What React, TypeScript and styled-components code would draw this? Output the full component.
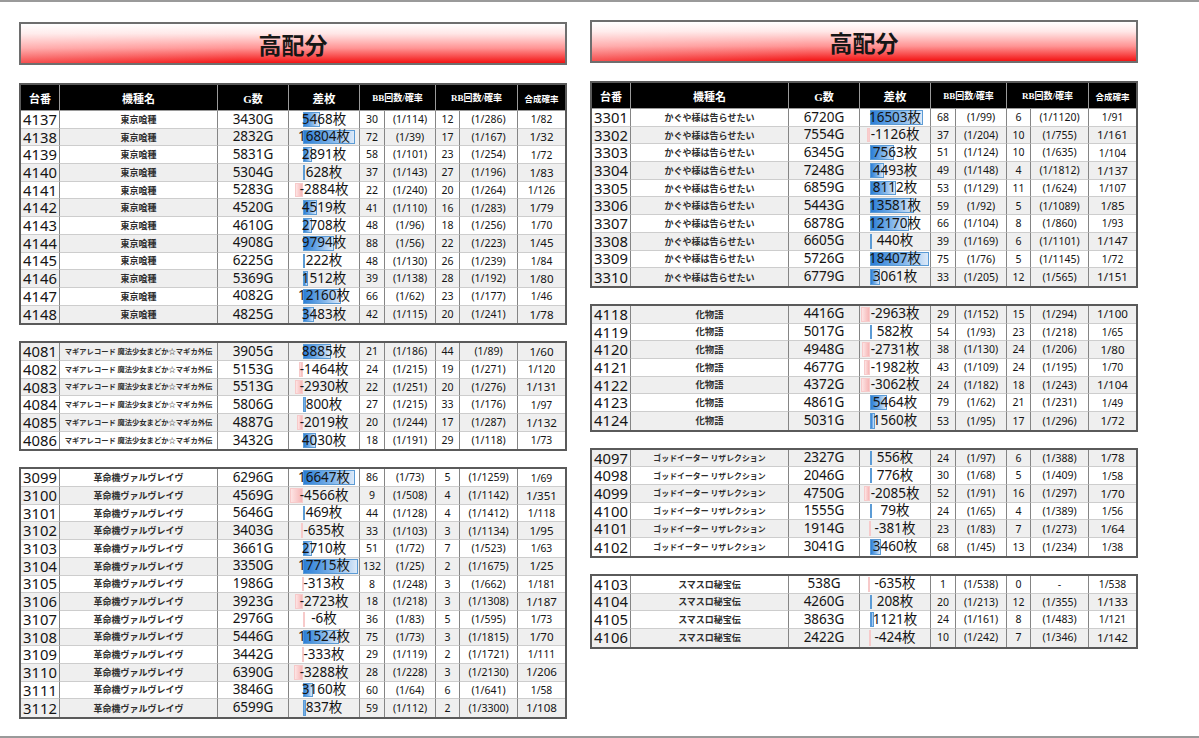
import React from 'react';
import styled, { createGlobalStyle } from 'styled-components';

const GlobalStyle = createGlobalStyle`
  html, body {
    margin: 0;
    padding: 0;
    background: #fff;
  }
  body {
    font-family: "Noto Sans", "Noto Sans CJK JP", sans-serif;
    color: #111;
  }
`;

const Page = styled.div`
  width: 1199px;
  height: 738px;
  box-sizing: border-box;
  border-top: 2px solid #9a9a9a;
  border-bottom: 2px solid #9a9a9a;
  padding-left: 19px;
  display: flex;
  gap: 23px;
  overflow: hidden;
`;

const Panel = styled.section<{ $top: number }>`
  width: 548px;
  padding-top: ${p => p.$top}px;
  display: flex;
  flex-direction: column;
  gap: 16px;
`;

const Title = styled.h1`
  margin: 0 0 2px;
  height: 43px;
  box-sizing: border-box;
  border: 2px solid #6e6e6e;
  background:
    linear-gradient(to right, rgba(255, 255, 255, 0.25), rgba(255, 255, 255, 0) 40%),
    linear-gradient(to bottom, #ffffff 0%, #ffe6e6 25%, #ff9494 62%, #f31414 100%);
  display: flex;
  align-items: center;
  justify-content: center;
  font-family: "Noto Sans CJK JP", sans-serif;
  font-size: 23px;
  font-weight: 700;
  color: #161616;
`;

const Table = styled.table`
  width: 548px;
  box-sizing: border-box;
  border: 2px solid #5a5a5a;
  border-collapse: separate;
  border-spacing: 0;
  table-layout: fixed;
`;

const HeadRow = styled.tr`
  height: 26px;
  background: #000;
`;

const HeadCell = styled.th<{ $size: number }>`
  padding: 0;
  color: #fff;
  font-family: "Liberation Serif", "Noto Sans CJK JP", serif;
  font-weight: 700;
  font-size: ${p => p.$size}px;
  text-align: center;
  white-space: nowrap;
  border-right: 1px solid #9a9a9a;
  border-bottom: 1px solid #9a9a9a;
  &:last-child {
    border-right: 0;
  }
`;

const Row = styled.tr<{ $alt: boolean }>`
  height: 17.7px;
  background: ${p => (p.$alt ? '#efefef' : '#fff')};
  &:last-child td {
    border-bottom: 0;
  }
`;

const Cell = styled.td`
  padding: 0;
  line-height: 1;
  text-align: center;
  white-space: nowrap;
  color: #141414;
  border-right: 1px solid #858585;
  border-bottom: 1px solid #cdcdcd;
  &:last-child {
    border-right: 0;
  }
`;

const NumberCell = styled(Cell)`
  text-align: left;
  padding-left: 2px;
  font-size: 14.8px;
`;

const NameCell = styled(Cell)<{ $size: number }>`
  overflow: hidden;
  font-family: "Noto Sans CJK JP", sans-serif;
  font-size: ${p => p.$size}px;
  font-weight: 700;
  color: #2e2e2e;
`;

const GameCell = styled(Cell)`
  font-size: 13.5px;
`;

const DiffCell = styled(Cell)`
  position: relative;
  overflow: hidden;
  font-size: 13.5px;
`;

const DiffText = styled.span`
  position: relative;
  z-index: 1;
`;

const Bar = styled.div<{ $neg: boolean }>`
  position: absolute;
  top: 1px;
  bottom: 1px;
  box-sizing: border-box;
  background: ${p =>
    p.$neg
      ? 'linear-gradient(to left, #f6b6b6 0%, #fde4e4 100%)'
      : 'linear-gradient(to right, #2b7ed6 0%, #7db3ea 55%, #dce9f8 100%)'};
  border: 1px solid ${p => (p.$neg ? '#f7caca' : '#5b9bd5')};
`;

const CountCell = styled(Cell)`
  font-size: 10.5px;
`;

const RateCell = styled(Cell)`
  font-size: 10.5px;
`;

const TotalCell = styled(Cell)<{ $alt: boolean }>`
  font-size: ${p => (p.$alt ? 11.6 : 10.3)}px;
`;

type Data = [string, string, number, string, string, string, string, string];

interface Group {
  name: string;
  nameSize: number;
  rows: Data[];
}

interface PanelData {
  top: number;
  max: number;
  min: number;
  groups: Group[];
}

const COLS = [39, 158, 71, 71, 25, 51, 24, 58, 47];

const panels: PanelData[] = [
  {
    top: 20,
    max: 17715,
    min: 4566,
    groups: [
      {
        name: '東京喰種',
        nameSize: 9,
        rows: [
          ['4137', '3430G', 5468, '30', '(1/114)', '12', '(1/286)', '1/82'],
          ['4138', '2832G', 16804, '72', '(1/39)', '17', '(1/167)', '1/32'],
          ['4139', '5831G', 2891, '58', '(1/101)', '23', '(1/254)', '1/72'],
          ['4140', '5304G', 628, '37', '(1/143)', '27', '(1/196)', '1/83'],
          ['4141', '5283G', -2884, '22', '(1/240)', '20', '(1/264)', '1/126'],
          ['4142', '4520G', 4519, '41', '(1/110)', '16', '(1/283)', '1/79'],
          ['4143', '4610G', 2708, '48', '(1/96)', '18', '(1/256)', '1/70'],
          ['4144', '4908G', 9794, '88', '(1/56)', '22', '(1/223)', '1/45'],
          ['4145', '6225G', 222, '48', '(1/130)', '26', '(1/239)', '1/84'],
          ['4146', '5369G', 1512, '39', '(1/138)', '28', '(1/192)', '1/80'],
          ['4147', '4082G', 12160, '66', '(1/62)', '23', '(1/177)', '1/46'],
          ['4148', '4825G', 3483, '42', '(1/115)', '20', '(1/241)', '1/78'],
        ],
      },
      {
        name: 'マギアレコード 魔法少女まどか☆マギカ外伝',
        nameSize: 7.3,
        rows: [
          ['4081', '3905G', 8885, '21', '(1/186)', '44', '(1/89)', '1/60'],
          ['4082', '5153G', -1464, '24', '(1/215)', '19', '(1/271)', '1/120'],
          ['4083', '5513G', -2930, '22', '(1/251)', '20', '(1/276)', '1/131'],
          ['4084', '5806G', 800, '27', '(1/215)', '33', '(1/176)', '1/97'],
          ['4085', '4887G', -2019, '20', '(1/244)', '17', '(1/287)', '1/132'],
          ['4086', '3432G', 4030, '18', '(1/191)', '29', '(1/118)', '1/73'],
        ],
      },
      {
        name: '革命機ヴァルヴレイヴ',
        nameSize: 9,
        rows: [
          ['3099', '6296G', 16647, '86', '(1/73)', '5', '(1/1259)', '1/69'],
          ['3100', '4569G', -4566, '9', '(1/508)', '4', '(1/1142)', '1/351'],
          ['3101', '5646G', 469, '44', '(1/128)', '4', '(1/1412)', '1/118'],
          ['3102', '3403G', -635, '33', '(1/103)', '3', '(1/1134)', '1/95'],
          ['3103', '3661G', 2710, '51', '(1/72)', '7', '(1/523)', '1/63'],
          ['3104', '3350G', 17715, '132', '(1/25)', '2', '(1/1675)', '1/25'],
          ['3105', '1986G', -313, '8', '(1/248)', '3', '(1/662)', '1/181'],
          ['3106', '3923G', -2723, '18', '(1/218)', '3', '(1/1308)', '1/187'],
          ['3107', '2976G', -6, '36', '(1/83)', '5', '(1/595)', '1/73'],
          ['3108', '5446G', 11524, '75', '(1/73)', '3', '(1/1815)', '1/70'],
          ['3109', '3442G', -333, '29', '(1/119)', '2', '(1/1721)', '1/111'],
          ['3110', '6390G', -3288, '28', '(1/228)', '3', '(1/2130)', '1/206'],
          ['3111', '3846G', 3160, '60', '(1/64)', '6', '(1/641)', '1/58'],
          ['3112', '6599G', 837, '59', '(1/112)', '2', '(1/3300)', '1/108'],
        ],
      },
    ],
  },
  {
    top: 18,
    max: 18407,
    min: 3062,
    groups: [
      {
        name: 'かぐや様は告らせたい',
        nameSize: 9,
        rows: [
          ['3301', '6720G', 16503, '68', '(1/99)', '6', '(1/1120)', '1/91'],
          ['3302', '7554G', -1126, '37', '(1/204)', '10', '(1/755)', '1/161'],
          ['3303', '6345G', 7563, '51', '(1/124)', '10', '(1/635)', '1/104'],
          ['3304', '7248G', 4493, '49', '(1/148)', '4', '(1/1812)', '1/137'],
          ['3305', '6859G', 8112, '53', '(1/129)', '11', '(1/624)', '1/107'],
          ['3306', '5443G', 13581, '59', '(1/92)', '5', '(1/1089)', '1/85'],
          ['3307', '6878G', 12170, '66', '(1/104)', '8', '(1/860)', '1/93'],
          ['3308', '6605G', 440, '39', '(1/169)', '6', '(1/1101)', '1/147'],
          ['3309', '5726G', 18407, '75', '(1/76)', '5', '(1/1145)', '1/72'],
          ['3310', '6779G', 3061, '33', '(1/205)', '12', '(1/565)', '1/151'],
        ],
      },
      {
        name: '化物語',
        nameSize: 9.4,
        rows: [
          ['4118', '4416G', -2963, '29', '(1/152)', '15', '(1/294)', '1/100'],
          ['4119', '5017G', 582, '54', '(1/93)', '23', '(1/218)', '1/65'],
          ['4120', '4948G', -2731, '38', '(1/130)', '24', '(1/206)', '1/80'],
          ['4121', '4677G', -1982, '43', '(1/109)', '24', '(1/195)', '1/70'],
          ['4122', '4372G', -3062, '24', '(1/182)', '18', '(1/243)', '1/104'],
          ['4123', '4861G', 5464, '79', '(1/62)', '21', '(1/231)', '1/49'],
          ['4124', '5031G', 1560, '53', '(1/95)', '17', '(1/296)', '1/72'],
        ],
      },
      {
        name: 'ゴッドイーター リザレクション',
        nameSize: 7.9,
        rows: [
          ['4097', '2327G', 556, '24', '(1/97)', '6', '(1/388)', '1/78'],
          ['4098', '2046G', 776, '30', '(1/68)', '5', '(1/409)', '1/58'],
          ['4099', '4750G', -2085, '52', '(1/91)', '16', '(1/297)', '1/70'],
          ['4100', '1555G', 79, '24', '(1/65)', '4', '(1/389)', '1/56'],
          ['4101', '1914G', -381, '23', '(1/83)', '7', '(1/273)', '1/64'],
          ['4102', '3041G', 3460, '68', '(1/45)', '13', '(1/234)', '1/38'],
        ],
      },
      {
        name: 'スマスロ秘宝伝',
        nameSize: 9,
        rows: [
          ['4103', '538G', -635, '1', '(1/538)', '0', '-', '1/538'],
          ['4104', '4260G', 208, '20', '(1/213)', '12', '(1/355)', '1/133'],
          ['4105', '3863G', 1121, '24', '(1/161)', '8', '(1/483)', '1/121'],
          ['4106', '2422G', -424, '10', '(1/242)', '7', '(1/346)', '1/142'],
        ],
      },
    ],
  },
];

function barStyle(v: number, max: number, min: number): React.CSSProperties {
  const W = 70;
  const axis = (W * min) / (max + min);
  if (v >= 0) {
    const w = Math.max((v / max) * (W - axis - 1), 1);
    return { left: axis, width: w };
  }
  const w = (-v / min) * (axis - 1);
  return { left: axis - w, width: w };
}

const Cols = () => (
  <colgroup>
    {COLS.map((w, i) => (
      <col key={i} style={{ width: w }} />
    ))}
  </colgroup>
);

const Head = () => (
  <thead>
    <HeadRow>
      <HeadCell $size={11}>台番</HeadCell>
      <HeadCell $size={11}>機種名</HeadCell>
      <HeadCell $size={11}>G数</HeadCell>
      <HeadCell $size={11.5}>差枚</HeadCell>
      <HeadCell $size={9} colSpan={2}>BB回数/確率</HeadCell>
      <HeadCell $size={9} colSpan={2}>RB回数/確率</HeadCell>
      <HeadCell $size={8.5}>合成確率</HeadCell>
    </HeadRow>
  </thead>
);

const GroupTable: React.FC<{ group: Group; first: boolean; start: number; max: number; min: number }> = ({
  group,
  first,
  start,
  max,
  min,
}) => (
  <Table>
    <Cols />
    {first && <Head />}
    <tbody>
      {group.rows.map((r, i) => {
        const alt = (start + i) % 2 === 1;
        return (
          <Row key={r[0]} $alt={alt}>
            <NumberCell>{r[0]}</NumberCell>
            <NameCell $size={group.nameSize}>{group.name}</NameCell>
            <GameCell>{r[1]}</GameCell>
            <DiffCell>
              {r[2] !== 0 && <Bar $neg={r[2] < 0} style={barStyle(r[2], max, min)} />}
              <DiffText>{r[2]}枚</DiffText>
            </DiffCell>
            <CountCell>{r[3]}</CountCell>
            <RateCell>{r[4]}</RateCell>
            <CountCell>{r[5]}</CountCell>
            <RateCell>{r[6]}</RateCell>
            <TotalCell $alt={alt}>{r[7]}</TotalCell>
          </Row>
        );
      })}
    </tbody>
  </Table>
);

export default function App() {
  return (
    <>
      <GlobalStyle />
      <Page>
        {panels.map((p, pi) => {
          let idx = 0;
          return (
            <Panel key={pi} $top={p.top}>
              <Title>高配分</Title>
              {p.groups.map((g, gi) => {
                const start = idx;
                idx += g.rows.length + 1;
                return <GroupTable key={gi} group={g} first={gi === 0} start={start} max={p.max} min={p.min} />;
              })}
            </Panel>
          );
        })}
      </Page>
    </>
  );
}
